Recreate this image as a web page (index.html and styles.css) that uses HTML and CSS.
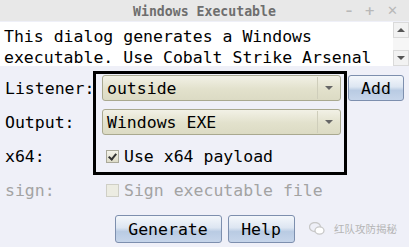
FILE: index.html
```html
<!DOCTYPE html>
<html lang="en">
  <head>
    <meta charset="utf-8" />
    <title>Windows Executable</title>
    <link rel="stylesheet" href="styles.css">
  </head>
  <body>
    <div class="window">
      <div class="titlebar">
        <span class="title">Windows Executable</span>
        <div class="wm-buttons">
          <span>&#8211;</span><span>+</span><span>&#10005;</span>
        </div>
      </div>
      <div class="desc">
        <div class="desc-text">This dialog generates a Windows<br />executable. Use Cobalt Strike Arsenal</div>
        <div class="scrollbar">
          <span class="arrow up"></span>
          <span class="track"></span>
          <span class="arrow down"></span>
        </div>
      </div>
      <div class="form">
        <label>Listener:</label>
        <div class="combo">outside<span class="combo-btn"></span></div>
        <button class="btn add">Add</button>

        <label>Output:</label>
        <div class="combo">Windows EXE<span class="combo-btn"></span></div>
        <span></span>

        <label>x64:</label>
        <div class="check"><span class="box checked"></span>Use x64 payload</div>
        <span></span>

        <label class="disabled">sign:</label>
        <div class="check disabled"><span class="box"></span>Sign executable file</div>
        <span></span>

        <div class="highlight"></div>
      </div>
      <div class="actions">
        <button class="btn generate">Generate</button>
        <button class="btn help">Help</button>
      </div>
      <div class="watermark">
        <svg width="16" height="13" viewBox="0 0 16 13">
          <ellipse cx="6" cy="5" rx="5.5" ry="4.5" fill="none" stroke="#c8c8c8" stroke-width="1.3" />
          <ellipse cx="10.5" cy="8.5" rx="4.5" ry="3.6" fill="#fff" stroke="#c8c8c8" stroke-width="1.3" />
        </svg>
        <span>红队攻防揭秘</span>
      </div>
    </div>
  </body>
</html>
```

FILE: styles.css
```css
html,
body {
  margin: 0;
  padding: 0;
}

body {
  width: 409px;
  height: 247px;
  overflow: hidden;
  background-color: #eff0f8;
  font-family: "DejaVu Sans Mono", monospace;
  font-size: 16.5px;
  color: #000;
}

.window {
  position: relative;
  height: 247px;
  display: flex;
  flex-direction: column;
}

.titlebar {
  height: 21px;
  background-color: #e8e8e8;
  display: flex;
  align-items: center;
  justify-content: center;
  position: relative;
}

.title {
  font-weight: bold;
  font-size: 13.2px;
  color: #6e6e6e;
  padding-top: 1px;
}

.wm-buttons {
  position: absolute;
  right: 11px;
  top: 0;
  height: 21px;
  display: flex;
  align-items: center;
  gap: 12px;
  font-family: "DejaVu Sans", sans-serif;
  font-weight: bold;
  font-size: 13px;
  color: #b8b8b8;
}

.desc {
  height: 44px;
  margin-top: 1px;
  display: flex;
  background-color: #fff;
}

.desc-text {
  flex: 1;
  padding: 4px 0 0 4px;
  line-height: 21px;
  white-space: nowrap;
  overflow: hidden;
}

.scrollbar {
  width: 16px;
  display: flex;
  flex-direction: column;
  background-color: #eaeaea;
}

.arrow {
  height: 16px;
  background-color: #f2f2f2;
  border: 1px solid #dadada;
  box-sizing: border-box;
  display: flex;
  align-items: center;
  justify-content: center;
}

.arrow::after {
  content: "";
  border-left: 4px solid transparent;
  border-right: 4px solid transparent;
}

.arrow.up::after {
  border-bottom: 4px solid #555;
}

.arrow.down::after {
  border-top: 4px solid #555;
}

.track {
  flex: 1;
  background-color: #f6f6f6;
}

.form {
  position: relative;
  margin-top: 5px;
  display: grid;
  grid-template-columns: 90px 239px 1fr;
  grid-template-rows: repeat(4, 34px);
  column-gap: 7px;
  padding-left: 5px;
  align-items: center;
}

.form label {
  white-space: nowrap;
}

.form label.disabled,
.check.disabled {
  color: #a3a3a3;
}

.combo {
  height: 26px;
  box-sizing: border-box;
  border: 1px solid #a9a990;
  border-radius: 3px;
  background: linear-gradient(#f2f1e6, #e2e1cc 55%, #dcdbc4);
  display: flex;
  align-items: center;
  padding-left: 4px;
  position: relative;
}

.combo-btn {
  position: absolute;
  right: 1px;
  top: 1px;
  bottom: 1px;
  width: 21px;
  border-left: 1px solid #cfcebb;
  display: flex;
  align-items: center;
  justify-content: center;
}

.combo-btn::after {
  content: "";
  border-left: 4px solid transparent;
  border-right: 4px solid transparent;
  border-top: 4px solid #666;
}

.btn {
  font-family: "DejaVu Sans Mono", monospace;
  font-size: 16.5px;
  color: #000;
  height: 26px;
  border: 1px solid #7d8fae;
  border-radius: 3px;
  background: linear-gradient(#f4f7fb, #dde6f2 45%, #b9cbe3 60%, #c6d5ea);
  padding: 0;
}

.btn.add {
  width: 56px;
  justify-self: start;
}

.check {
  display: flex;
  align-items: center;
  padding-left: 4px;
}

.box {
  width: 11px;
  height: 11px;
  margin-right: 5px;
  border: 1px solid #aaa99a;
  background: linear-gradient(#f4f3ea, #dedcc8);
  position: relative;
}

.check.disabled .box {
  border-color: #cfcfc6;
  background: #ecece2;
}

.box.checked::after {
  content: "";
  position: absolute;
  left: 3px;
  top: 1px;
  width: 3px;
  height: 6px;
  border-right: 2px solid #333;
  border-bottom: 2px solid #333;
  transform: rotate(40deg);
}

.highlight {
  position: absolute;
  left: 93px;
  top: 0;
  width: 248px;
  height: 98px;
  border: 3px solid #000;
  pointer-events: none;
}

.actions {
  margin-top: 8px;
  display: flex;
  justify-content: center;
  gap: 6px;
}

.actions .btn {
  height: 28px;
}

.btn.generate {
  width: 107px;
}

.btn.help {
  width: 67px;
}

.watermark {
  position: absolute;
  right: 12px;
  bottom: 11px;
  display: flex;
  align-items: center;
  gap: 9px;
  font-family: "Noto Sans CJK SC", sans-serif;
  font-size: 10.5px;
  color: #b5b5b5;
}
```
